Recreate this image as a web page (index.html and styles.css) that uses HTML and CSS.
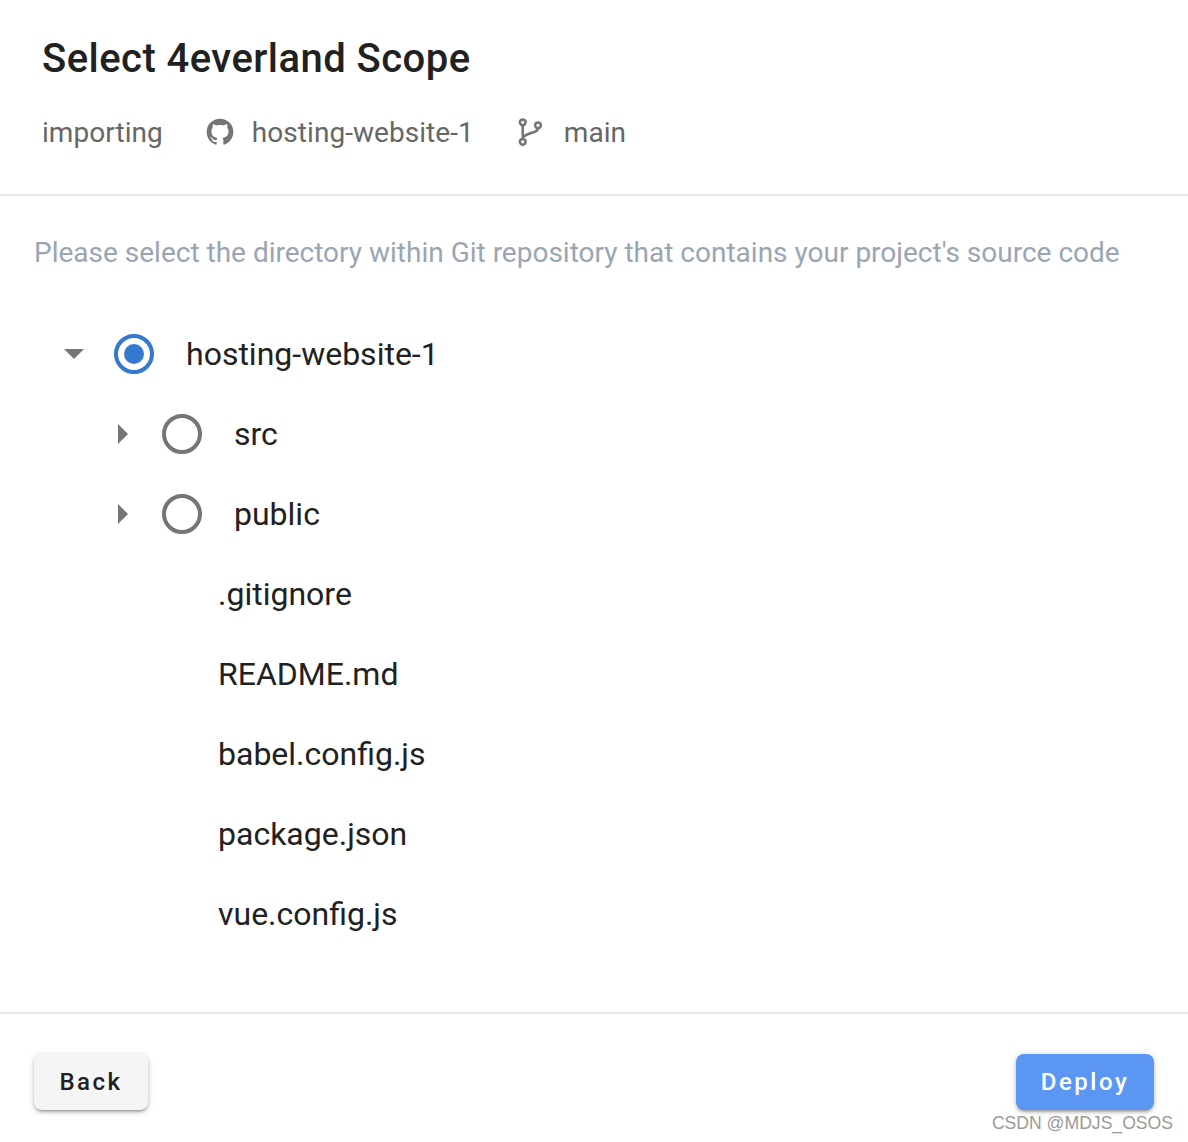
FILE: index.html
```html
<!DOCTYPE html>
<html lang="en">
<head>
<meta charset="utf-8">
<title>Select 4everland Scope</title>
<link rel="stylesheet" href="styles.css">
</head>
<body>
<div class="card">
  <header class="head">
    <h1 class="title">Select 4everland Scope</h1>
    <div class="meta">
      <span class="importing">importing</span>
      <svg class="gh" viewBox="0 0 24 24" width="32" height="32"><path fill="#757575" d="M12 2A10 10 0 0 0 2 12c0 4.42 2.87 8.17 6.84 9.5.5.08.66-.23.66-.5v-1.69c-2.77.6-3.36-1.34-3.36-1.34-.46-1.16-1.11-1.47-1.11-1.47-.91-.62.07-.6.07-.6 1 .07 1.53 1.03 1.53 1.03.87 1.52 2.34 1.07 2.91.83.09-.65.35-1.09.63-1.34-2.22-.25-4.55-1.11-4.55-4.92 0-1.11.38-2 1.03-2.71-.1-.25-.45-1.29.1-2.64 0 0 .84-.27 2.75 1.02.79-.22 1.65-.33 2.5-.33.85 0 1.71.11 2.5.33 1.91-1.29 2.75-1.02 2.75-1.02.55 1.35.2 2.39.1 2.64.65.71 1.03 1.6 1.03 2.71 0 3.82-2.34 4.66-4.57 4.91.36.31.69.92.69 1.85V21c0 .27.16.59.67.5C19.14 20.16 22 16.42 22 12A10 10 0 0 0 12 2z"/></svg>
      <span class="repo">hosting-website-1</span>
      <svg class="branch" viewBox="0 0 24 24" fill="none" stroke="#757575" stroke-width="2"><circle cx="6.2" cy="4.2" r="2.3"/><circle cx="6.2" cy="19.8" r="2.3"/><circle cx="18.4" cy="6.6" r="2.3"/><path d="M6.2 6.5v11M18.4 8.9c0 4-8.4 3.4-12.2 7.4"/></svg>
      <span class="branch-name">main</span>
    </div>
  </header>
  <main class="body">
    <p class="hint">Please select the directory within Git repository that contains your project's source code</p>
    <ul class="tree">
      <li class="row root">
        <span class="arrow down"></span>
        <span class="radio on"></span>
        <span class="label">hosting-website-1</span>
      </li>
      <li class="row dir">
        <span class="arrow right"></span>
        <span class="radio"></span>
        <span class="label">src</span>
      </li>
      <li class="row dir">
        <span class="arrow right"></span>
        <span class="radio"></span>
        <span class="label">public</span>
      </li>
      <li class="row file">.gitignore</li>
      <li class="row file">README.md</li>
      <li class="row file">babel.config.js</li>
      <li class="row file">package.json</li>
      <li class="row file">vue.config.js</li>
    </ul>
  </main>
  <footer class="foot">
    <button class="btn back">Back</button>
    <button class="btn deploy">Deploy</button>
    <span class="mark">CSDN @MDJS_OSOS</span>
  </footer>
</div>
</body>
</html>
```
FILE: styles.css
```css
* { box-sizing: border-box; }
html, body { margin: 0; padding: 0; background: #fff; }
body { font-family: Roboto, sans-serif; color: #212121; }
.card { width: 1188px; height: 1142px; overflow: hidden; display: flex; flex-direction: column; }
.head { height: 196px; padding: 35px 42px 0; border-bottom: 2px solid #e6e6e9; }
.title { margin: 0; font-size: 40px; line-height: 48px; font-weight: 500; letter-spacing: .45px; color: #212121; }
.meta { display: flex; align-items: center; margin-top: 31px; height: 36px; font-size: 28px; letter-spacing: .05px; color: #666; }
.gh { margin-left: 41px; }
.repo { margin-left: 16px; }
.branch { margin-left: 41px; width: 30px; height: 30px; }
.branch-name { margin-left: 19px; }
.body { flex: 1; padding: 0 34px; }
.hint { margin: 37px 0 0; font-size: 28px; line-height: 40px; color: #9aa5b4; white-space: nowrap; }
.tree { list-style: none; margin: 41px 0 0; padding: 0; font-size: 32px; color: #212121; }
.row { height: 80px; display: flex; align-items: center; }
.root { padding-left: 30px; }
.dir { padding-left: 84px; }
.file { padding-left: 184px; }
.arrow { width: 0; height: 0; flex: none; }
.arrow.down { border-left: 10px solid transparent; border-right: 10px solid transparent; border-top: 10px solid #757575; margin-right: 30px; }
.arrow.right { border-top: 10px solid transparent; border-bottom: 10px solid transparent; border-left: 10px solid #757575; margin-right: 34px; }
.radio { width: 40px; height: 40px; border-radius: 50%; border: 4px solid #757575; flex: none; position: relative; background: #fff; }
.radio.on { border-color: #3578d0; }
.radio.on::after { content: ""; position: absolute; left: 6px; top: 6px; width: 20px; height: 20px; border-radius: 50%; background: #3578d0; }
.label { margin-left: 32px; }
.foot { height: 130px; border-top: 2px solid #e6e6e9; padding: 40px 34px 0; display: flex; justify-content: space-between; align-items: flex-start; position: relative; }
.btn { height: 56px; border: 0; border-radius: 8px; font-family: Roboto, sans-serif; font-size: 24px; font-weight: 500; letter-spacing: 2.5px; box-shadow: 0 3px 3px -2px rgba(0,0,0,.3), 0 2px 4px rgba(0,0,0,.18), 0 1px 8px rgba(0,0,0,.1); }
.back { width: 114px; background: #f5f5f5; color: #212121; }
.deploy { width: 138px; background: #5b97f2; color: #fff; }
.mark { position: absolute; right: 15px; top: 97px; font-family: "Liberation Sans", sans-serif; font-size: 17.6px; line-height: 24px; color: #9a9a9a; }
```
